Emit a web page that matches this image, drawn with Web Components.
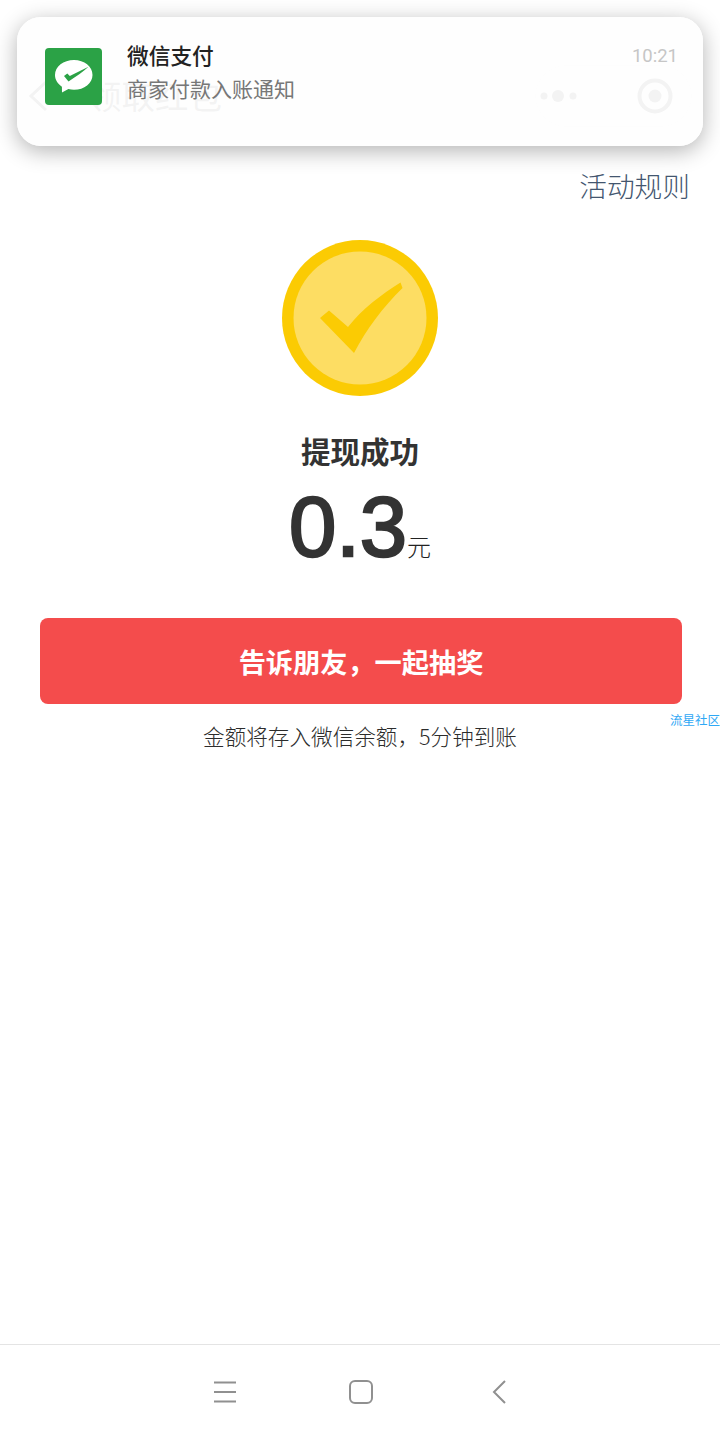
<!DOCTYPE html>
<html lang="zh-CN">
<head>
<meta charset="utf-8">
<title>提现成功</title>
<style>
  html, body { margin: 0; background: #fff; }
  body { font-family: "Noto Sans CJK SC", "Noto Sans", sans-serif; color: #333; }
</style>
</head>
<body>
<wallet-screen>
  <wx-notification slot="overlay" app="微信支付" time="10:21">商家付款入账通知</wx-notification>
  <page-header slot="header">领取红包</page-header>
  <rules-link>活动规则</rules-link>
  <success-badge></success-badge>
  <withdraw-result label="提现成功" amount="0.3" unit="元"></withdraw-result>
  <share-button>告诉朋友，一起抽奖</share-button>
  <water-mark>流星社区</water-mark>
  <hint-text>金额将存入微信余额，5分钟到账</hint-text>
  <nav-bar slot="footer"></nav-bar>
</wallet-screen>

<script>
const define = (name, html, init) => {
  customElements.define(name, class extends HTMLElement {
    constructor () {
      super()
      this.attachShadow({ mode: 'open' })
    }

    connectedCallback () {
      const attr = (key) => this.getAttribute(key) || ''
      this.shadowRoot.innerHTML = typeof html === 'function' ? html(attr) : html
      if (init) init(this)
    }
  })
}

define('wallet-screen', `
  <style>
    :host { display: flex; flex-direction: column; position: relative; width: 720px; height: 1440px; overflow: hidden; background: #fff; }
    main { flex: 1; display: flex; flex-direction: column; }
  </style>
  <slot name="overlay"></slot>
  <slot name="header"></slot>
  <main><slot></slot></main>
  <slot name="footer"></slot>
`)

define('wx-notification', (attr) => `
  <style>
    :host { display: flex; position: absolute; z-index: 2; left: 17px; top: 17px; width: 686px; height: 129px; box-sizing: border-box; padding: 31px 25px 0 28px; border-radius: 24px; background: rgba(254,254,254,.955); box-shadow: 0 5px 22px rgba(0,0,0,.3); }
    svg { display: block; flex: none; width: 57px; height: 57px; margin-right: 25px; }
    .text { flex: 1; }
    .app { font-size: 21.700px; font-weight: 500; line-height: 31px; margin-top: -9px; color: #222; }
    .body { font-size: 21px; line-height: 31px; margin-top: 3px; color: #777; }
    .time { font-family: Roboto, sans-serif; font-size: 18.500px; line-height: 28px; margin-top: -6px; color: #c6c6c6; }
  </style>
  <svg viewBox="0 0 57 57">
    <rect width="57" height="57" rx="4" fill="#2ba246"/>
    <path d="M29 12C18.500 12 10 18.600 10 27c0 4.700 2.700 8.900 6.900 11.700L17 44.500 23.400 41c1.800.5 3.700.7 5.600.7 10.300 0 18.500-6.500 18.500-14.800S39.300 12 29 12z" fill="#fff"/>
    <path d="M19 28l3.300-2.400 2.500 2.300L43.500 18.800C38 24 31 28.500 23.500 33.500z" fill="#2ba246"/>
  </svg>
  <div class="text">
    <div class="app">${attr('app')}</div>
    <div class="body"><slot></slot></div>
  </div>
  <div class="time">${attr('time')}</div>
`)

define('page-header', `
  <style>
    :host { display: flex; align-items: center; flex: none; height: 160px; box-sizing: border-box; padding: 32px 28px 0 28px; color: #000; }
    .back { width: 20px; height: 32px; margin-right: 40px; }
    .title { flex: 1; font-size: 33.500px; line-height: 46px; margin-top: -3px; }
    .capsule { display: flex; align-items: center; width: 157px; height: 62px; box-sizing: border-box; border: 1px solid rgba(0,0,0,.1); border-radius: 31px; }
    .dots { width: 101px; height: 12px; }
    .target { width: 36px; height: 36px; }
  </style>
  <svg class="back" viewBox="0 0 20 32"><path d="M18 2L3 16l15 14" fill="none" stroke="#000" stroke-width="3"/></svg>
  <div class="title"><slot></slot></div>
  <div class="capsule">
    <svg class="dots" viewBox="0 0 101 12"><circle cx="8" cy="6" r="3.500"/><circle cx="22" cy="6" r="6"/><circle cx="37" cy="6" r="3.500"/></svg>
    <svg class="target" viewBox="0 0 36 36"><circle cx="18" cy="18" r="15.500" fill="none" stroke="#000" stroke-width="4"/><circle cx="18" cy="18" r="6.500"/></svg>
  </div>
`)

define('rules-link', `
  <style>
    :host { display: block; margin-top: 6px; padding-right: 30px; text-align: right; font-size: 27.700px; font-weight: 300; line-height: 38px; color: #43566f; }
  </style>
  <slot></slot>
`)

define('success-badge', `
  <style>
    :host { display: flex; justify-content: center; margin-top: 36px; }
    svg { display: block; width: 156px; height: 156px; }
  </style>
  <svg viewBox="0 0 156 156">
    <circle cx="78" cy="78" r="78" fill="#fbcb03"/>
    <circle cx="78" cy="78" r="66.500" fill="#fddd63"/>
    <path d="M38 78l9-7.500L66 87C80 69 100 54 118.500 42.500l2 5.500C101 67 84 90 72 113z" fill="#fbcb03"/>
  </svg>
`)

define('withdraw-result', (attr) => `
  <style>
    :host { display: flex; flex-direction: column; align-items: center; margin-top: 35px; color: #333; }
    .label { font-size: 29.500px; font-weight: 700; line-height: 38px; }
    .line { display: flex; align-items: baseline; height: 100px; margin-top: 8px; margin-bottom: 3px; }
    .amount { font-family: "Liberation Sans", sans-serif; font-size: 85px; line-height: 100px; -webkit-text-stroke: 2.400px #333; }
    .unit { font-size: 24px; line-height: 30px; font-weight: 300; color: #222; }
  </style>
  <div class="label">${attr('label')}</div>
  <div class="line"><span class="amount">${attr('amount')}</span><span class="unit">${attr('unit')}</span></div>
`)

define('share-button', `
  <style>
    :host { display: flex; align-items: center; justify-content: center; height: 86px; margin: 38px 38px 0 40px; border-radius: 8px; background: #f44c4c; color: #fff; font-size: 27.200px; font-weight: 700; }
  </style>
  <slot></slot>
`)

define('water-mark', `
  <style>
    :host { display: block; position: absolute; right: 0; top: 712px; font-size: 12.500px; line-height: 16px; color: #2fa8f5; }
  </style>
  <slot></slot>
`)

define('hint-text', `
  <style>
    :host { display: block; margin-top: 16px; text-align: center; font-size: 21.600px; font-weight: 300; line-height: 32px; color: #2c2c2c; }
  </style>
  <slot></slot>
`)

define('nav-bar', `
  <style>
    :host { display: flex; justify-content: center; align-items: center; flex: none; gap: 112px; height: 96px; box-sizing: border-box; padding: 0 0 2px 4px; border-top: 1px solid #e4e4e4; }
    svg { display: block; width: 24px; height: 24px; fill: none; stroke: #909090; stroke-width: 2; }
    svg:last-child { margin-left: 2px; }
  </style>
  <svg viewBox="0 0 24 24"><path d="M1 2.500h22M1 12h22M1 21.500h22"/></svg>
  <svg viewBox="0 0 24 24"><rect x="1" y="1" width="22" height="22" rx="5"/></svg>
  <svg viewBox="0 0 24 24"><path d="M18 1L7 12l11 11"/></svg>
`)
</script>
</body>
</html>
